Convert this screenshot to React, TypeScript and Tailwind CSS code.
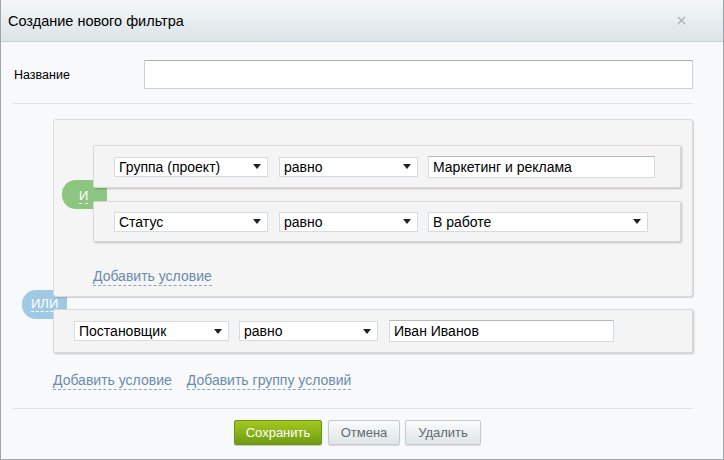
import React from "react";

const Arrow = () => (
  <svg width="8" height="5" viewBox="0 0 8 5" className="shrink-0">
    <path d="M0 0 L8 0 L4 5 Z" fill="#222" />
  </svg>
);

const Select = ({ w, text }: { w: string; text: string }) => (
  <div
    className={`${w} h-[20px] flex items-center justify-between bg-white border border-[#d4dce2] pl-[4px] pr-[6px] text-[14px] leading-[18px] text-black`}
  >
    <span>{text}</span>
    <Arrow />
  </div>
);

const TextInput = ({ w, text }: { w: string; text: string }) => (
  <div
    className={`${w} h-[22px] flex items-center bg-white border border-[#d4dce2] border-t-[#b3babf] pl-[4px] text-[14px] leading-[18px] text-black`}
  >
    {text}
  </div>
);

const Link = ({ children }: { children: React.ReactNode }) => (
  <span className="text-[14px] leading-[16px] text-[#6b8bad] border-b border-dashed border-[#8da6bf] pb-[1px]">
    {children}
  </span>
);

const Btn = ({ w, children }: { w: string; children: React.ReactNode }) => (
  <div
    className={`${w} h-[25px] flex items-center justify-center rounded-[2px] border border-[#c3cbcf] bg-gradient-to-b from-[#fafbfb] to-[#dfe5e8] shadow-[0_1px_1px_rgba(0,0,0,0.12)] text-[13px] text-[#5f6b72]`}
  >
    {children}
  </div>
);

export default function App() {
  return (
    <div
      className="w-[724px] h-[460px] flex flex-col bg-[#f8f9fb] border-x border-b border-[#9da6ab] overflow-hidden"
      style={{ fontFamily: '"Liberation Sans", Arial, sans-serif' }}
    >
      {/* Header */}
      <div className="h-[42px] shrink-0 flex items-center justify-between bg-gradient-to-b from-[#f4f7f8] to-[#dce4e7] border-b border-[#c6cfd3] pl-[7px] pr-[37px]">
        <span className="text-[14.5px] leading-[18px] text-black whitespace-nowrap">
          Создание нового фильтра
        </span>
        <svg width="9" height="9" viewBox="0 0 9 9">
          <path d="M1 1 L8 8 M8 1 L1 8" stroke="#a9b1b5" strokeWidth="1.3" />
        </svg>
      </div>

      {/* Body */}
      <div className="flex flex-col pl-[12px] pr-[29px]">
        <div className="mt-[18px] flex items-center h-[29px]">
          <span className="w-[131px] pl-[1px] text-[12.5px] leading-[16px] text-black whitespace-nowrap">
            Название
          </span>
          <div className="w-[549px] h-[29px] bg-white border border-[#cbd1d5] border-t-[#a7aeb3]" />
        </div>

        <div className="mt-[14px] h-px bg-[#dde2e5] w-[680px]" />

        {/* Conditions */}
        <div className="relative mt-[15px] pl-[40px]">
          {/* ИЛИ badge */}
          <div className="absolute left-[9px] top-[171px] w-[45px] h-[29px] rounded-l-[14px] bg-[#a0c9e4] pl-[9px] pt-[7px] text-[13px] leading-[14px]">
            <span className="text-white border-b border-dashed border-white">ИЛИ</span>
          </div>

          {/* Group panel */}
          <div className="relative z-10 w-[640px] h-[178px] rounded-[3px] border border-[#dcdcdc] bg-[#f5f5f5] shadow-[1px_1px_1px_rgba(0,0,0,0.15)] pt-[25px] pl-[39px]">
            {/* И badge */}
            <div className="absolute left-[8px] top-[60px] w-[45px] h-[29px] rounded-l-[14px] bg-[#8dc680] pl-[17px] pt-[9px] text-[13px] leading-[14px]">
              <span className="text-white border-b border-dashed border-white">И</span>
            </div>

            <div className="relative z-10 w-[588px] h-[43px] rounded-[2px] border border-[#d9d9d9] bg-[#f4f4f4] shadow-[1px_1px_2px_rgba(0,0,0,0.22)] flex items-center pl-[20px]">
              <Select w="w-[154px]" text="Группа (проект)" />
              <div className="w-[11px]" />
              <Select w="w-[139px]" text="равно" />
              <div className="w-[10px]" />
              <TextInput w="w-[227px]" text="Маркетинг и реклама" />
            </div>

            <div className="relative z-10 mt-[13px] w-[588px] h-[41px] rounded-[2px] border border-[#d9d9d9] bg-[#f4f4f4] shadow-[1px_1px_2px_rgba(0,0,0,0.22)] flex items-center pl-[20px]">
              <Select w="w-[154px]" text="Статус" />
              <div className="w-[11px]" />
              <Select w="w-[139px]" text="равно" />
              <div className="w-[10px]" />
              <Select w="w-[220px]" text="В работе" />
            </div>

            <div className="mt-[22px]">
              <Link>Добавить условие</Link>
            </div>
          </div>

          {/* OR condition */}
          <div className="relative z-10 mt-[12px] w-[640px] h-[44px] rounded-[2px] border border-[#d9d9d9] bg-[#f4f4f4] shadow-[1px_1px_2px_rgba(0,0,0,0.22)] flex items-center pl-[20px]">
            <Select w="w-[155px]" text="Постановщик" />
            <div className="w-[10px]" />
            <Select w="w-[139px]" text="равно" />
            <div className="w-[11px]" />
            <TextInput w="w-[225px]" text="Иван Иванов" />
          </div>

          <div className="mt-[19px] flex gap-[15px]">
            <Link>Добавить условие</Link>
            <Link>Добавить группу условий</Link>
          </div>
        </div>

        <div className="mt-[18px] h-px bg-[#dde2e5] w-[680px]" />

        <div className="mt-[11px] flex pl-[221px] gap-[5px]">
          <div className="w-[88px] h-[25px] flex items-center justify-center rounded-[2px] border border-[#6e9414] bg-gradient-to-b from-[#a2c91f] to-[#6f9c12] shadow-[0_1px_1px_rgba(0,0,0,0.2)] text-[13px] text-white mr-[1px]">
            Сохранить
          </div>
          <Btn w="w-[72px]">Отмена</Btn>
          <Btn w="w-[76px]">Удалить</Btn>
        </div>
      </div>
    </div>
  );
}
